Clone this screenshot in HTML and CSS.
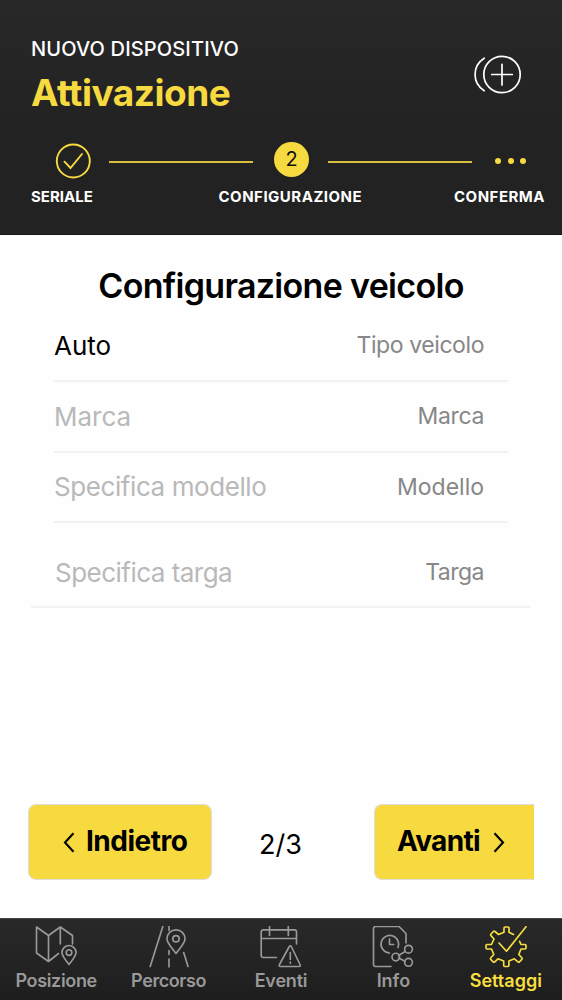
FILE: index.html
```html
<!DOCTYPE html>
<html lang="it">
<head>
<meta charset="utf-8">
<title>Attivazione</title>
<link rel="stylesheet" href="styles.css">
</head>
<body>
<div class="app">
  <header class="header">
    <div class="header-top">
      <div class="titles">
        <div class="eyebrow"><span>NUOVO DISPOSITIVO</span></div>
        <h1 class="title"><span>Attivazione</span></h1>
      </div>
      <svg class="add" width="50" height="42" viewBox="0 0 50 42" fill="none" stroke="#fff" stroke-width="1.7" stroke-linecap="round">
        <circle cx="30" cy="20.5" r="18.2"/>
        <path d="M30 10.3v20.6M19.700 20.500h20.600M12.200 4.200C0 12 0 29 12.200 36.700"/>
      </svg>
    </div>
    <div class="steps">
      <svg class="step-done" width="36" height="36" viewBox="0 0 36 36" fill="none" stroke="#f6da40" stroke-width="1.9" stroke-linecap="round">
        <circle cx="18.300" cy="18" r="16.500"/>
        <path d="M9.500 18.700l6 6.300L27 11"/>
      </svg>
      <div class="rule"></div>
      <div class="step-current">2</div>
      <div class="rule"></div>
      <div class="dots"><i></i><i></i><i></i></div>
    </div>
    <div class="step-labels">
      <span class="l1">SERIALE</span>
      <span class="l2">CONFIGURAZIONE</span>
      <span class="l3">CONFERMA</span>
    </div>
  </header>

  <main class="content">
    <h2 class="heading"><span>Configurazione veicolo</span></h2>
    <div class="field first"><span class="value filled">Auto</span><span class="name n1">Tipo veicolo</span></div>
    <div class="field"><span class="value v2">Marca</span><span class="name n2">Marca</span></div>
    <div class="field"><span class="value v3">Specifica modello</span><span class="name n3">Modello</span></div>
    <div class="field last"><span class="value v4">Specifica targa</span><span class="name n4">Targa</span></div>
  </main>

  <div class="actions">
    <button class="btn back">
      <svg width="12" height="21" viewBox="0 0 12 21" fill="none" stroke="#000" stroke-width="2.1"><path d="M10.500 1.200L2 10.500l8.500 9.300"/></svg>
      <span>Indietro</span>
    </button>
    <span class="page">2/3</span>
    <button class="btn next">
      <span>Avanti</span>
      <svg width="12" height="21" viewBox="0 0 12 21" fill="none" stroke="#000" stroke-width="2.1"><path d="M1.500 1.200L10 10.500l-8.500 9.300"/></svg>
    </button>
  </div>

  <nav class="tabs">
    <a class="tab">
      <svg width="44" height="44" viewBox="0 0 44 44"><path d="M24.500 27.500L14.500 35.500 2.500 27V1l12 8.500L26.300 1l12.200 8.500V18M14.500 9.500V35.500M26.300 1v17"/><path d="M35 38.500c-4-5-7-8.500-7-12a7 7 0 0 1 14 0c0 3.500-3 7-7 12z"/><circle cx="35" cy="26.500" r="2.800"/></svg>
      <span class="t1">Posizione</span>
    </a>
    <a class="tab">
      <svg width="44" height="44" viewBox="0 0 44 44"><path d="M15.800 .5L3.200 40.500M36.700 26.500l4.300 14M22 .5v4M22 24.500v4M22 33v8"/><path d="M29 27.500c-5-7-9-10-9-14.700a9 9 0 0 1 18 0c0 4.700-4 7.700-9 14.700z"/><circle cx="29" cy="12.800" r="3.200"/></svg>
      <span class="t2">Percorso</span>
    </a>
    <a class="tab">
      <svg width="44" height="44" viewBox="0 0 44 44"><path d="M17.500 31.500H4.200a2 2 0 0 1-2-2V5.800a2 2 0 0 1 2-2H35.500a2 2 0 0 1 2 2V18M2.200 12.500H37.500M10.500 .5v9M29.300 .5v9"/><path d="M30.300 20.500L20.500 38.500q-1 2 1 2H40q2 0 1-2L32.300 20.500q-1-1.500-2 0zM31.300 26.500v7M31.300 36v1.200"/></svg>
      <span class="t3">Eventi</span>
    </a>
    <a class="tab">
      <svg width="44" height="44" viewBox="0 0 44 44"><path d="M20 40.500H4.500a2 2 0 0 1-2-2V2.500a2 2 0 0 1 2-2H28l7 7v9.500"/><path d="M18.500 27a8.800 8.800 0 1 1 8.500-5.500M18.500 13v5.500h4.200M27.500 29.500l6.700-4M27.500 32l6.700 3.200"/><circle cx="24.800" cy="31" r="3.800"/><circle cx="37.500" cy="23.200" r="3.900"/><circle cx="37.500" cy="36.300" r="3.900"/></svg>
      <span class="t4">Info</span>
    </a>
    <a class="tab active">
      <svg width="44" height="44" viewBox="0 0 44 44"><path d="M29.500 8.500L25 6.200V2q0-1-1-1h-3q-1 0-1 1v4.200L14.500 8.500 11 5.500q-1-.7-1.700 0L7 8q-.7.800 0 1.600l3 3.400L7.500 18.500H3q-1 0-1 1v2.500q0 1 1 1h4.500L9.800 28.500 6.800 31.800q-.7.800 0 1.600L9 35.800q.8.800 1.700 0L14 32.800l5.700 2.300V39.500q0 1 1 1h3.200q1 0 1-1V35.100l5.500-2.300 3.500 3q.9.700 1.700 0l2.200-2.400q.7-.8 0-1.600L34.800 28.500 37 23h4q1 0 1-1V19.500q0-1-1-1H37L35.600 15.300"/><path d="M15 17l7.500 8.200L42 .7"/></svg>
      <span class="t5">Settaggi</span>
    </a>
  </nav>
</div>
</body>
</html>
```

FILE: styles.css
```css
* { box-sizing: border-box; }
body { margin: 0; font-family: Inter, "Liberation Sans", sans-serif; background: #fefefe; color: #000; }
.app { width: 562px; height: 1000px; display: flex; flex-direction: column; overflow: hidden; }
.header { height: 235px; background: linear-gradient(#282828, #222 60%); border-bottom: 1px solid #161616; color: #fff; white-space: nowrap; flex: none; }
.header-top { height: 124px; padding: 35px 33px 0 31px; display: flex; justify-content: space-between; }
.eyebrow { font-size: 20px; font-weight: 550; line-height: 28px; letter-spacing: .15px; }
.title { margin: 5px 0 0; font-size: 37px; line-height: 50px; font-weight: 650; color: #f6da40; letter-spacing: -.5px; }
.add { margin: 19px 7px 0 0; }
.steps { height: 56px; padding: 18px 0 0 55px; display: flex; align-items: flex-start; }
.step-done { margin-right: 18px; margin-top: 1px; }
.rule { width: 144px; height: 2px; background: #d9c03c; margin-top: 19px; }
.step-current { width: 35px; height: 35px; margin: 0 19px 0 21px; border-radius: 50%; background: #f6da40; color: #111; font-size: 20px; line-height: 35px; text-align: center; }
.dots { display: flex; gap: 6.500px; margin: 16px 0 0 23px; }
.dots i { width: 6px; height: 6px; border-radius: 50%; background: #f6da40; }
.step-labels { padding: 7px 16px 0 31px; display: flex; font-size: 15px; line-height: 20px; font-weight: 700; }
.l1 { width: 187.500px; }
.l2 { width: 235.500px; letter-spacing: .5px; }
.l3 { letter-spacing: .5px; }
.content { height: 569px; padding: 32px 31px 0 31px; flex: none; white-space: nowrap; }
.heading { margin: 0; font-size: 34px; line-height: 38px; height: 43px; font-weight: 620; text-align: center; letter-spacing: -.68px; }
.field { height: 70.500px; margin: 0 23px; padding-right: 24px; display: flex; justify-content: space-between; align-items: center; border-bottom: 2px solid #f2f2f2; }
.field.first { height: 72px; }
.field.last { height: 85px; margin: 0; padding: 15px 47px 0 24px; }
.value { font-size: 26px; color: #b9b9b9; }
.filled { color: #000; }
.name { font-size: 23px; color: #878787; }
.n1 { letter-spacing: -.42px; }
.n2 { letter-spacing: -.35px; }
.n4 { letter-spacing: -.5px; }
.v3 { letter-spacing: -.42px; }
.v4 { letter-spacing: -.52px; }
.actions { height: 114px; padding: 0 28px; display: flex; flex: none; }
.btn { height: 76px; padding: 0; display: flex; align-items: center; border: 1px solid #ddd; border-radius: 8px; background: #f6da40; color: #000; font: 700 28px/36px Inter, sans-serif; white-space: nowrap; letter-spacing: -.5px; }
.btn span { margin-bottom: 3px; }
.back { width: 184px; padding-left: 34px; gap: 11px; }
.next { width: 160px; padding-left: 22px; gap: 13px; border-right: 0; border-radius: 8px 0 0 8px; letter-spacing: -.7px; }
.page { width: 162px; padding-left: 47px; font-size: 27px; line-height: 82px; }
.tabs { height: 82px; display: grid; grid-template-columns: repeat(5, 1fr); background: linear-gradient(#292929, #1e1e1e); border-top: 1px solid #444; flex: none; }
.tab { padding-top: 7px; display: flex; flex-direction: column; align-items: center; color: #999; font-size: 18px; line-height: 22px; font-weight: 600; }
.tab svg { fill: none; stroke: currentColor; stroke-width: 1.650; stroke-linecap: round; stroke-linejoin: round; }
.tab.active { color: #f8df3e; }
.t1 { letter-spacing: -.35px; }
.t2 { letter-spacing: -.42px; }
.t3 { letter-spacing: -.2px; }
```
